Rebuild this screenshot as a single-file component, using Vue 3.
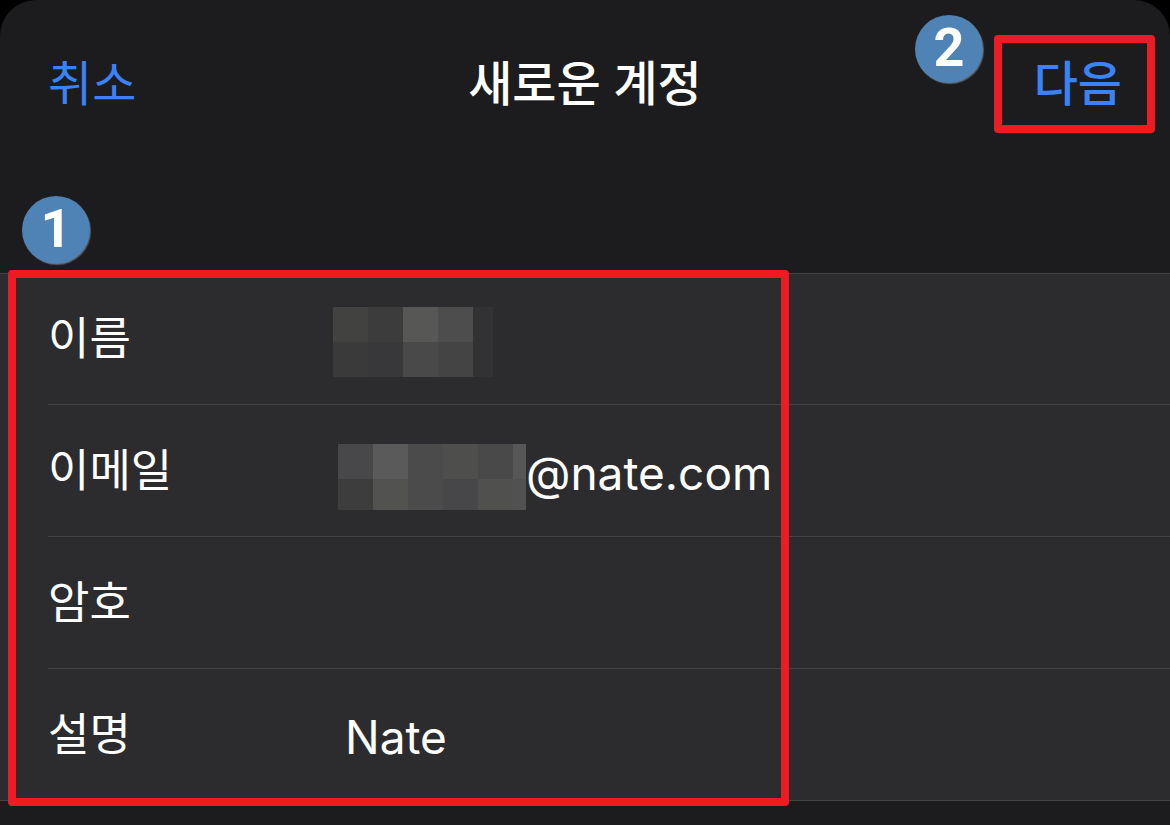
<script setup>
import { ref } from 'vue'

const fields = ref([
  {
    id: 'name',
    label: '이름',
    type: 'text',
    value: '',
    mask: {
      columns: [35, 35, 35, 35, 20],
      rows: [35, 35],
      colors: [
        ['#424241', '#3c3c3d', '#575756', '#4d4d4e', '#323234'],
        ['#3a3a3b', '#38383a', '#49494a', '#444445', '#323234']
      ]
    }
  },
  {
    id: 'email',
    label: '이메일',
    type: 'text',
    value: '@nate.com',
    mask: {
      columns: [35, 35, 35, 35, 35, 13],
      rows: [35, 31],
      colors: [
        ['#48484a', '#5a5a5a', '#4b4b4c', '#4e4e4d', '#49494a', '#575758'],
        ['#3d3d3e', '#525251', '#4b4b4c', '#474749', '#50504f', '#515152']
      ]
    }
  },
  { id: 'password', label: '암호', type: 'password', value: '' },
  { id: 'description', label: '설명', type: 'text', value: 'Nate' }
])

const tracks = (sizes) => sizes.map((s) => s + 'px').join(' ')
</script>

<template>
  <main class="sheet">
    <header class="bar">
      <button type="button" class="action">취소</button>
      <h1 class="title">새로운 계정</h1>
      <div class="next">
        <button type="button" class="action action-next">다음</button>
        <span class="frame frame-next"></span>
        <span class="badge badge-next">2</span>
      </div>
    </header>

    <form class="group" @submit.prevent>
      <div v-for="field in fields" :key="field.id" class="row" :class="'row-' + field.id">
        <label class="label" :for="field.id">{{ field.label }}</label>
        <span
          v-if="field.mask"
          class="mask"
          :style="{
            gridTemplateColumns: tracks(field.mask.columns),
            gridTemplateRows: tracks(field.mask.rows)
          }"
        >
          <i v-for="(color, i) in field.mask.colors.flat()" :key="i" :style="{ background: color }"></i>
        </span>
        <input :id="field.id" v-model="field.value" class="value" :type="field.type" autocomplete="off" />
      </div>
      <span class="frame frame-form"></span>
      <span class="badge badge-form">1</span>
    </form>
  </main>
</template>

<style>
body {
  margin: 0;
  background: #000;
}
</style>

<style scoped>
.sheet {
  box-sizing: border-box;
  min-height: 100vh;
  overflow: hidden;
  background: #1c1c1e;
  border-radius: 36px 36px 0 0;
  color: #fff;
  font-family: Inter, "Noto Sans CJK KR", sans-serif;
  font-size: 48px;
}

.bar {
  display: grid;
  grid-template-columns: 1fr auto 1fr;
  align-items: center;
  height: 168px;
  margin-bottom: 105px;
  padding: 0 48px;
}

.title {
  margin: 0;
  font-size: 48px;
  font-weight: 500;
  line-height: 72px;
}

.action {
  padding: 0;
  border: 0;
  background: none;
  color: #3b82f7;
  font: inherit;
  line-height: 72px;
  justify-self: start;
}

.action-next {
  font-weight: 500;
}

.next {
  position: relative;
  justify-self: end;
}

.group {
  position: relative;
  border-top: 1px solid #434345;
  border-bottom: 1px solid #434345;
  background: #2c2c2e;
}

.row {
  box-sizing: border-box;
  display: flex;
  align-items: center;
  height: 132px;
  margin-left: 48px;
  border-bottom: 1px solid #434345;
}

.row-name {
  height: 131px;
}

.row-description {
  height: 131px;
  border-bottom: 0;
}

.label {
  flex: none;
  width: 285px;
  font-size: 45px;
  line-height: 64px;
}

.mask {
  display: grid;
  flex: none;
  margin-top: 6px;
}

.row-email .mask {
  margin-top: 12px;
  margin-left: 5px;
}

.value {
  flex: 1;
  min-width: 0;
  padding: 4px 0 0;
  border: 0;
  outline: 0;
  background: none;
  color: inherit;
  font: inherit;
  font-size: 46px;
  line-height: 60px;
}

.row-description .value {
  padding-left: 12px;
}

.frame {
  position: absolute;
  box-sizing: border-box;
  border: 8px solid #ed1c24;
  border-radius: 4px;
  pointer-events: none;
}

.frame-form {
  top: -4px;
  bottom: -6px;
  left: 8px;
  width: 781px;
}

.frame-next {
  inset: -13px -33px -13px -40px;
}

.badge {
  position: absolute;
  width: 68px;
  height: 68px;
  border-radius: 50%;
  background: #4f82b5;
  box-shadow: 1px 1px 1px #5c5c5c;
  font-family: Roboto, "Liberation Sans", sans-serif;
  font-size: 54px;
  font-weight: 700;
  line-height: 66px;
  text-align: center;
}

.badge-form {
  top: -78px;
  left: 22px;
}

.badge-next {
  top: -33px;
  right: 139px;
}
</style>
